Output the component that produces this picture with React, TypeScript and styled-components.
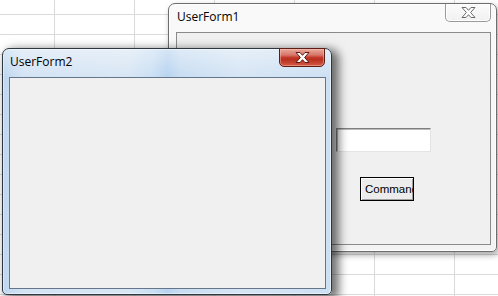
import React from 'react'
import styled, { createGlobalStyle } from 'styled-components'

const Global = createGlobalStyle`
html, body {
  margin: 0;
  padding: 0;
  width: 498px;
  height: 296px;
  overflow: hidden;
  background: #ffffff;
}
`

// the excel sheet behind the forms
const Sheet = styled.div`
position: relative;
width: 498px;
height: 296px;
overflow: hidden;
background-color: #ffffff;
background-image:
  linear-gradient(to right, #d8dadc 1px, transparent 1px),
  linear-gradient(to bottom, #d8dadc 1px, transparent 1px);
background-size: 80px 20px;
background-position: 54px 14px;
`

const Window = styled.div<{ $active?: boolean; $x: number; $y: number; $w: number; $h: number }>`
position: absolute;
left: ${({ $x }) => $x}px;
top: ${({ $y }) => $y}px;
width: ${({ $w }) => $w}px;
height: ${({ $h }) => $h}px;
box-sizing: border-box;
display: flex;
flex-direction: column;
border: 1px solid ${({ $active }) => ($active ? '#2e3640' : '#6e6e6e')};
border-radius: 7px 7px 5px 5px;
padding: ${({ $active }) => ($active ? '0 5px 5px 6px' : '0 5px 6px 7px')};
background: ${({ $active }) =>
  $active
    ? `linear-gradient(180deg, rgba(255,255,255,0.4) 0px, rgba(255,255,255,0) 28px),
       linear-gradient(90deg, #bdd6ef 0%, #d3e3f4 6%, #d8e6f4 38%, #cadff3 46%, #b8d3f0 50%, #c8ddf2 54%, #d6e5f4 72%, #cde0f3 100%)`
    : 'linear-gradient(180deg, #f9f9f9 0%, #f3f3f3 100%)'};
box-shadow: ${({ $active }) =>
  $active
    ? '5px 3px 10px 2px rgba(0,0,0,0.55), 0 0 0 1px rgba(255,255,255,0.45) inset'
    : '2px 3px 6px rgba(0,0,0,0.35), 0 0 0 1px rgba(255,255,255,0.8) inset'};
`

const TitleBar = styled.div`
height: 28px;
flex: none;
display: flex;
justify-content: space-between;
align-items: flex-start;
`

const Title = styled.div`
margin: 5px 0 0 1px;
font-family: "Segoe UI", "Open Sans", sans-serif;
font-size: 12px;
line-height: 16px;
color: #000000;
`

const CloseButton = styled.div<{ $active?: boolean }>`
width: 46px;
height: ${({ $active }) => ($active ? '19px' : '18px')};
margin: ${({ $active }) => ($active ? '-1px 1px 0 0' : '0')};
box-sizing: border-box;
display: flex;
align-items: center;
justify-content: center;
border: 1px solid ${({ $active }) => ($active ? '#5e1e16' : '#9a9a9a')};
border-top: ${({ $active }) => ($active ? '1px solid #5e1e16' : 'none')};
border-radius: 0 0 5px 5px;
background: ${({ $active }) =>
  $active
    ? 'linear-gradient(180deg, #e9a99c 0%, #d7776a 35%, #c23a2b 50%, #b8301f 62%, #d45a44 100%)'
    : 'linear-gradient(180deg, #fbfbfb 0%, #f1f1f1 100%)'};
box-shadow: ${({ $active }) =>
  $active ? 'inset 0 0 0 1px rgba(255,200,190,0.45)' : 'inset 0 0 0 1px #ffffff'};
`

const Client = styled.div`
flex: 1;
box-sizing: border-box;
background: #f0f0f0;
border: 1px solid #65768a;
overflow: hidden;
`

// controls on the form are placed where the designer dropped them
const FormCanvas = styled(Client)`
display: flex;
flex-direction: column;
align-items: flex-start;
padding: 95px 0 0 159px;
border-color: #8a8a8a;
`

const TextBox = styled.div`
width: 95px;
height: 24px;
box-sizing: border-box;
background: #ffffff;
border: 1px solid;
border-color: #7f7f7f #e4e4e4 #e4e4e4 #7f7f7f;
box-shadow: inset 1px 1px 0 #b9b9b9;
`

const CommandButton = styled.div`
width: 54px;
height: 24px;
margin: 25px 0 0 24px;
box-sizing: border-box;
border: 1px solid #000000;
background: #ececec;
box-shadow: inset 1px 1px 0 #ffffff, inset -1px -1px 0 #9f9f9f;
padding-left: 4px;
overflow: hidden;
white-space: nowrap;
font-family: "Liberation Sans", Arial, sans-serif;
font-size: 11.5px;
line-height: 22px;
color: #000000;
`

function CloseGlyph({ active }: { active?: boolean }) {
  return (
    <svg width="15" height="11" viewBox="0 0 15 11">
      <polygon
        points="1,0.5 5,0.5 7.5,3.3 10,0.5 14,0.5 9.6,5.5 14,10.5 10,10.5 7.5,7.7 5,10.5 1,10.5 5.4,5.5"
        fill="#ffffff"
        stroke={active ? '#5a1a12' : '#6a6a6a'}
        strokeWidth="1"
        strokeLinejoin="round"
      />
    </svg>
  )
}

export default function App() {
  return (
    <>
      <Global />
      <Sheet>
        <Window $x={168} $y={3} $w={329} $h={249}>
          <TitleBar>
            <Title>UserForm1</Title>
            <CloseButton>
              <CloseGlyph />
            </CloseButton>
          </TitleBar>
          <FormCanvas>
            <TextBox />
            <CommandButton>CommandButton1</CommandButton>
          </FormCanvas>
        </Window>
        <Window $active $x={2} $y={48} $w={330} $h={247}>
          <TitleBar>
            <Title>UserForm2</Title>
            <CloseButton $active>
              <CloseGlyph active />
            </CloseButton>
          </TitleBar>
          <Client />
        </Window>
      </Sheet>
    </>
  )
}
